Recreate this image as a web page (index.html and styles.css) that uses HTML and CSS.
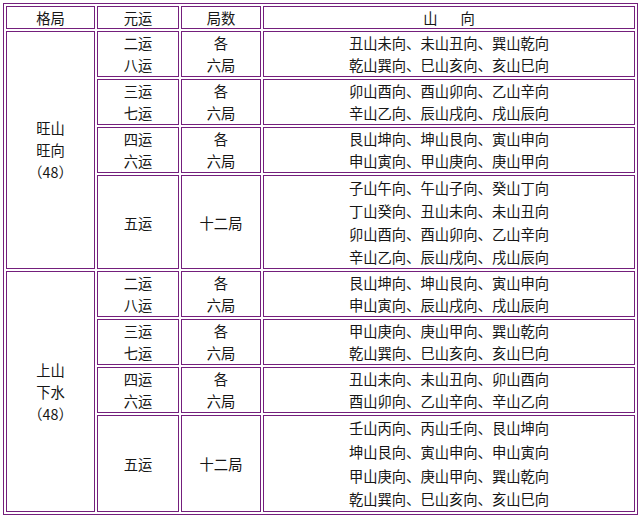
FILE: index.html
```html
<!DOCTYPE html>
<html lang="zh">
<head>
<meta charset="utf-8">
<link rel="stylesheet" href="styles.css">
</head>
<body>
<table class="grid">
  <colgroup>
    <col class="c1"><col class="c2"><col class="c3"><col class="c4">
  </colgroup>
  <thead>
    <tr class="head">
      <td>格局</td><td>元运</td><td>局数</td><td>山<span class="gap"></span>向</td>
    </tr>
  </thead>
  <tbody>
    <tr class="two">
      <td rowspan="4" class="kind">旺山<br>旺向<br>（48）</td>
      <td>二运<br>八运</td><td>各<br>六局</td>
      <td>丑山未向、未山丑向、巽山乾向<br>乾山巽向、巳山亥向、亥山巳向</td>
    </tr>
    <tr class="two">
      <td>三运<br>七运</td><td>各<br>六局</td>
      <td>卯山酉向、酉山卯向、乙山辛向<br>辛山乙向、辰山戌向、戌山辰向</td>
    </tr>
    <tr class="two">
      <td>四运<br>六运</td><td>各<br>六局</td>
      <td>艮山坤向、坤山艮向、寅山申向<br>申山寅向、甲山庚向、庚山甲向</td>
    </tr>
    <tr class="four">
      <td>五运</td><td>十二局</td>
      <td>子山午向、午山子向、癸山丁向<br>丁山癸向、丑山未向、未山丑向<br>卯山酉向、酉山卯向、乙山辛向<br>辛山乙向、辰山戌向、戌山辰向</td>
    </tr>
    <tr class="two">
      <td rowspan="4" class="kind">上山<br>下水<br>（48）</td>
      <td>二运<br>八运</td><td>各<br>六局</td>
      <td>艮山坤向、坤山艮向、寅山申向<br>申山寅向、辰山戌向、戌山辰向</td>
    </tr>
    <tr class="two">
      <td>三运<br>七运</td><td>各<br>六局</td>
      <td>甲山庚向、庚山甲向、巽山乾向<br>乾山巽向、巳山亥向、亥山巳向</td>
    </tr>
    <tr class="two">
      <td>四运<br>六运</td><td>各<br>六局</td>
      <td>丑山未向、未山丑向、卯山酉向<br>酉山卯向、乙山辛向、辛山乙向</td>
    </tr>
    <tr class="four tall">
      <td>五运</td><td>十二局</td>
      <td>壬山丙向、丙山壬向、艮山坤向<br>坤山艮向、寅山申向、申山寅向<br>甲山庚向、庚山甲向、巽山乾向<br>乾山巽向、巳山亥向、亥山巳向</td>
    </tr>
  </tbody>
</table>
</body>
</html>
```

FILE: styles.css
```css
html, body {
  margin: 0;
  background: #ffffff;
}
body {
  padding: 3px 0 0 3px;
  font-family: "Noto Sans CJK SC", "Noto Sans", sans-serif;
  font-size: 14.3px;
  color: #161616;
}
.grid {
  width: 634px;
  table-layout: fixed;
  border-collapse: separate;
  border-spacing: 2px;
  border: 1px solid #741f7c;
}
.c1 { width: 89px; }
.c2 { width: 82px; }
.c3 { width: 80px; }
.c4 { width: 372px; }
.grid td {
  border: 1px solid #741f7c;
  padding: 0;
  text-align: center;
  vertical-align: middle;
  line-height: 22px;
}
.head td {
  height: 21px;
  line-height: 21px;
}
.two td {
  line-height: 22px;
}
.four td {
  line-height: 23px;
}
.four.tall td {
  line-height: 23.75px;
}
.grid td.kind {
  line-height: 22px;
}
.gap {
  display: inline-block;
  width: 23px;
}
```
